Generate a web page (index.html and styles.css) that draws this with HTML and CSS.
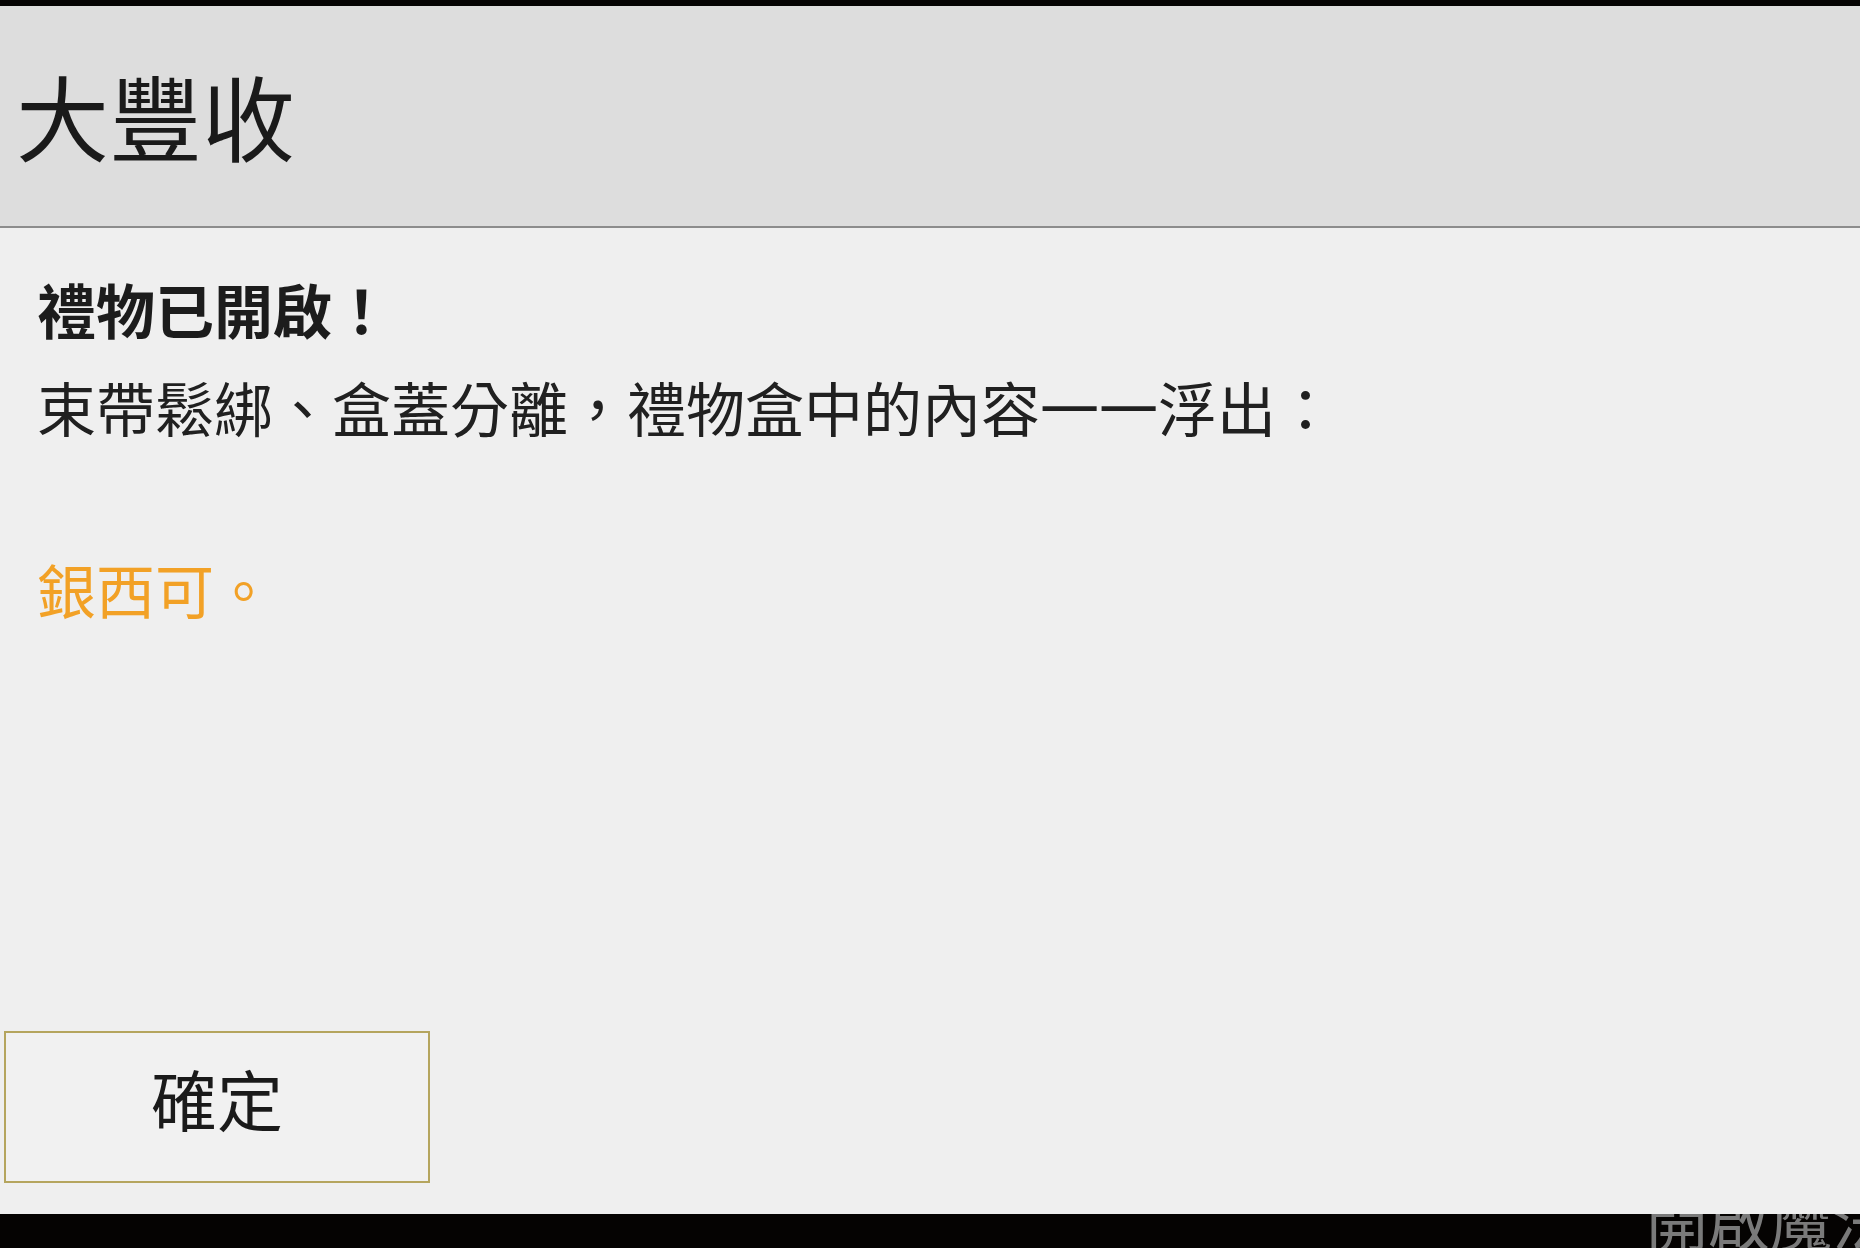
FILE: index.html
```html
<!DOCTYPE html>
<html lang="zh-Hant">
<head>
    <meta charset="UTF-8">
    <meta name="viewport" content="width=device-width, initial-scale=1.0">
    <title>大豐收</title>
    <link rel="stylesheet" href="styles.css">
</head>
<body>
    <div class="screen">
        <div class="title-bar">
            <h1>大豐收</h1>
        </div>

        <div class="dialog">
            <div class="message">
                <h2>禮物已開啟！</h2>
                <p class="desc">束帶鬆綁、盒蓋分離，禮物盒中的內容一一浮出：</p>
                <p class="reward">銀西可。</p>
            </div>
            <button class="ok-btn">確定</button>
        </div>

        <div class="bottom-bar">
            <span class="behind-label">開啟魔法</span>
        </div>
    </div>
</body>
</html>
```

FILE: styles.css
```css
body {
    margin: 0;
    background: #050302;
    font-family: "Noto Sans CJK TC", "Noto Sans CJK SC", sans-serif;
}
.screen {
    height: 1248px;
    padding-top: 6px;
    box-sizing: border-box;
    display: flex;
    flex-direction: column;
    overflow: hidden;
}
.title-bar {
    height: 220px;
    flex-shrink: 0;
    background: #dddddd;
    border-bottom: 2px solid #8c8c8c;
    display: flex;
    align-items: center;
    padding-left: 16px;
}
.title-bar h1 {
    margin: 0 0 4px 0;
    font-size: 93px;
    font-weight: 400;
    line-height: 1;
    color: #1a1a1a;
}
.dialog {
    flex: 1;
    background: #efefef;
    display: flex;
    flex-direction: column;
    padding-bottom: 31px;
}
.message {
    padding-left: 37px;
}
.message h2 {
    margin: 51px 0 0 0;
    font-size: 59px;
    font-weight: 700;
    line-height: 1;
    color: #1c1c1c;
}
.desc {
    margin: 39px 0 0 0;
    font-size: 59px;
    line-height: 1;
    color: #202020;
}
.reward {
    margin: 123px 0 0 0;
    font-size: 59px;
    line-height: 1;
    color: #f2a126;
}
.ok-btn {
    margin-top: auto;
    margin-left: 4px;
    width: 426px;
    height: 152px;
    padding: 0 0 20px 0;
    background: #f1f1f1;
    border: 2px solid #b5a55e;
    font-family: inherit;
    font-size: 66px;
    color: #1a1a1a;
    cursor: pointer;
}
.bottom-bar {
    height: 34px;
    flex-shrink: 0;
    display: flex;
    justify-content: flex-end;
    align-items: flex-end;
    overflow: hidden;
}
.behind-label {
    margin-right: -34px;
    margin-bottom: -2px;
    font-size: 62px;
    line-height: 1;
    color: #7a7a7a;
}
```
